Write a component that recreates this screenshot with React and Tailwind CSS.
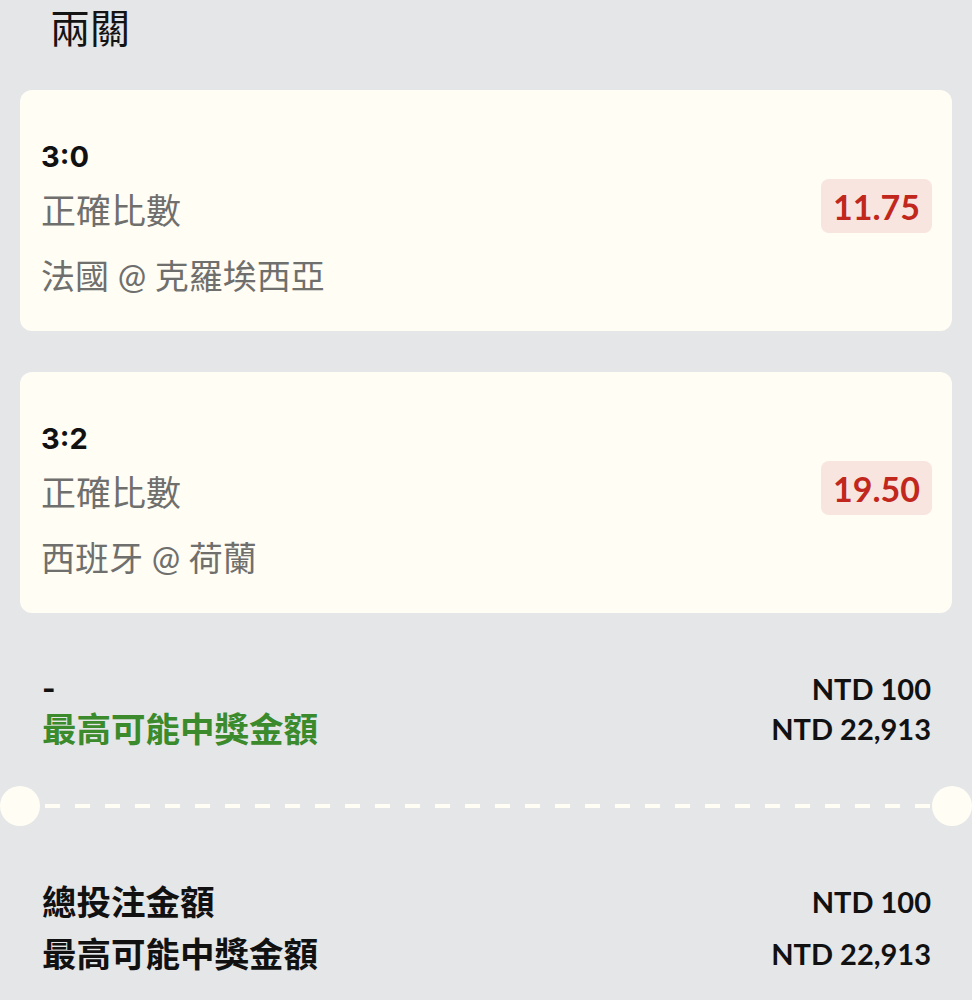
const legs = [
  { score: '3:0', market: '正確比數', match: '法國 @ 克羅埃西亞', odds: '11.75' },
  { score: '3:2', market: '正確比數', match: '西班牙 @ 荷蘭', odds: '19.50' },
];

const sys = "font-['Inter','Noto_Sans_CJK_TC',sans-serif]";

function LegCard({ leg }) {
  return (
    <div className="flex items-center justify-between rounded-[12px] bg-[#fffdf4] pl-[21px] pr-[20px] pt-[46px] pb-[23px]">
      <div className="flex flex-col">
        <div className={`${sys} text-[29px] leading-[42px] font-bold text-[#111]`}>{leg.score}</div>
        <div className="text-[35px] leading-[65px] text-[#6f6f6d]">{leg.market}</div>
        <div className="text-[34px] leading-[65px] text-[#6f6f6d]">{leg.match}</div>
      </div>
      <div className="mb-[32px] flex h-[54px] items-center rounded-[8px] bg-[#f8e5df] px-[12px] text-[34px] font-bold text-[#c1271c]">
        {leg.odds}
      </div>
    </div>
  );
}

function Row({ left, right, leftClass = 'text-[#111]', lh = 'leading-[40px]' }) {
  return (
    <div className={`flex items-center justify-between ${lh}`}>
      <span className={`text-[34.5px] font-bold ${leftClass}`}>{left}</span>
      <span className="text-[29px] font-bold text-[#111]">{right}</span>
    </div>
  );
}

export default function App() {
  return (
    <div className="min-h-screen overflow-hidden bg-[#e5e6e8] font-['Lato','Noto_Sans_CJK_TC',sans-serif]">
      <div className="px-[20px]">
        <h1 className={`${sys} pl-[30px] text-[40px] leading-[58px] font-normal text-[#141414]`}>兩關</h1>

        <div className="mt-[32px] flex flex-col gap-[41px]">
          {legs.map((leg) => (
            <LegCard key={leg.score} leg={leg} />
          ))}
        </div>

        <div className="mt-[56px] pl-[22px] pr-[21px]">
          <div className="flex items-center justify-between leading-[40px]">
            <span className={`${sys} text-[29px] font-bold text-[#111]`}>-</span>
            <span className="text-[29px] font-bold text-[#111]">NTD 100</span>
          </div>
          <Row left="最高可能中獎金額" right="NTD 22,913" leftClass="text-[#3b8a2b]" />
        </div>
      </div>

      <div className="mt-[37px] flex h-[40px] items-center">
        <div className="h-[40px] w-[40px] shrink-0 rounded-full bg-[#fffdf4]" />
        <div className="h-[4px] flex-1 bg-[repeating-linear-gradient(90deg,transparent_0_5px,#fffdf4_5px_20px,transparent_20px_30px)]" />
        <div className="h-[40px] w-[40px] shrink-0 rounded-full bg-[#fffdf4]" />
      </div>

      <div className="mt-[50px] pl-[42px] pr-[41px] pb-[22px]">
        <Row left="總投注金額" right="NTD 100" lh="leading-[52px]" />
        <Row left="最高可能中獎金額" right="NTD 22,913" lh="leading-[52px]" />
      </div>
    </div>
  );
}
